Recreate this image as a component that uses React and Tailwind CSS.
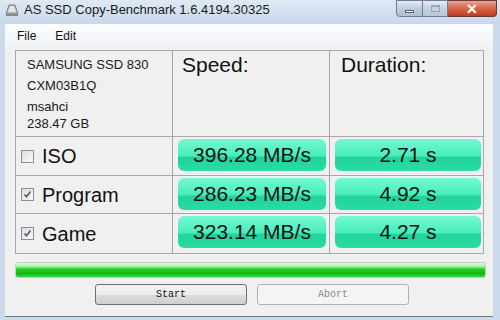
import React from 'react';

const rows = [
  { name: 'ISO', checked: false, speed: '396.28 MB/s', time: '2.71 s' },
  { name: 'Program', checked: true, speed: '286.23 MB/s', time: '4.92 s' },
  { name: 'Game', checked: true, speed: '323.14 MB/s', time: '4.27 s' },
];

const DriveIcon = () => (
  <svg width="14" height="14" viewBox="0 0 14 14">
    <path d="M4 2 L10 2 L13 11 L1 11 Z" fill="#b8b8b8" stroke="#6a6a6a" strokeWidth="0.8" />
    <rect x="1" y="11" width="12" height="2" fill="#8a8a8a" />
    <path d="M5 3 L9 3 L11 9 L3 9 Z" fill="#e4e4e4" />
  </svg>
);

const CheckBox = ({ checked }) => (
  <div className="w-[13px] h-[13px] border border-[#8f8f8f] bg-[linear-gradient(135deg,#dcdcdc,#fbfbfb)] flex items-center justify-center shrink-0">
    {checked && (
      <svg width="9" height="9" viewBox="0 0 9 9">
        <path d="M1.5 4.5 L3.5 6.8 L7.5 1.5" fill="none" stroke="#4a5a7a" strokeWidth="1.6" />
      </svg>
    )}
  </div>
);

const GreenCell = ({ children }) => (
  <div className="h-[32px] rounded-[6px] bg-[linear-gradient(to_bottom,#74f8d4_0%,#48eebb_52%,#22d49b_58%,#28dca3_100%)] flex items-center justify-center text-[21px] text-[#111]">
    {children}
  </div>
);

export default function App() {
  return (
    <div className="w-[500px] h-[320px] flex flex-col bg-[#cbdbeb] font-['Liberation_Sans',Arial,sans-serif] overflow-hidden">
      {/* title bar */}
      <div className="h-[24px] flex items-start shrink-0 bg-[linear-gradient(to_bottom,#dfe9f4,#c8d8ea)]">
        <div className="flex items-center h-[20px] pl-[5px] gap-[5px]">
          <DriveIcon />
          <span className="text-[13px] text-[#1a1a1a]">AS SSD Copy-Benchmark 1.6.4194.30325</span>
        </div>
        <div className="ml-auto mr-[3px] flex h-[17px]">
          <div className="w-[27px] h-full border border-[#6f7d8e] rounded-bl-[4px] bg-[linear-gradient(to_bottom,#e4ecf5,#bfcddd_50%,#aebfd3)] flex items-center justify-center">
            <div className="w-[9px] h-[3px] bg-white border border-[#55606e] mt-[5px]" />
          </div>
          <div className="w-[25px] h-full border-y border-r border-[#6f7d8e] bg-[linear-gradient(to_bottom,#e4ecf5,#c6d2e0_50%,#b8c7d8)] flex items-center justify-center">
            <div className="w-[9px] h-[7px] border border-[#9aa6b4] border-t-2" />
          </div>
          <div className="w-[49px] h-full border-y border-r border-[#6b3a30] rounded-br-[4px] bg-[linear-gradient(to_bottom,#e8a898,#d4654b_50%,#c23a1e)] flex items-center justify-center">
            <span className="text-white text-[14px] font-bold leading-none">✕</span>
          </div>
        </div>
      </div>

      {/* client area */}
      <div className="flex-1 ml-[5px] mr-[7px] mb-[3px] flex flex-col bg-[#f0f0f0] border-b border-[#6d7a88]">
        <div className="h-[23px] flex items-center gap-[19px] pl-[12px] text-[12px] text-[#111] bg-[linear-gradient(to_bottom,#fbfcfd,#f1f3f6)]">
          <span>File</span>
          <span>Edit</span>
        </div>

        <div className="pl-[10px] pt-[3px]">
          <div className="w-[469px] grid grid-cols-[156px_156px_153px] grid-rows-[85px_38px_37px_39px] gap-px p-px bg-[#a8a8a8]">
            <div className="bg-[#f0f0f0] pl-[11px] pt-[6px] text-[13px] text-[#1a1a1a] leading-[16px]">
              <div>SAMSUNG SSD 830</div>
              <div className="mt-[5px]">CXM03B1Q</div>
              <div className="mt-[5px]">msahci</div>
              <div className="mt-[1px]">238.47 GB</div>
            </div>
            <div className="bg-[#f0f0f0] pl-[9px] pt-[2px] text-[21px] leading-[24px] text-[#111]">Speed:</div>
            <div className="bg-[#f0f0f0] pl-[11px] pt-[2px] text-[21px] leading-[24px] text-[#111]">Duration:</div>

            {rows.map((r) => (
              <React.Fragment key={r.name}>
                <div className="bg-[#f0f0f0] flex items-center pl-[5px] gap-[8px]">
                  <CheckBox checked={r.checked} />
                  <span className="text-[20px] text-[#111]">{r.name}</span>
                </div>
                <div className="bg-[#f0f0f0] pl-[5px] pr-[3px] pt-[2px]">
                  <GreenCell>{r.speed}</GreenCell>
                </div>
                <div className="bg-[#f0f0f0] pl-[5px] pr-[2px] pt-[2px]">
                  <GreenCell>{r.time}</GreenCell>
                </div>
              </React.Fragment>
            ))}
          </div>

          <div className="mt-[8px] w-[471px] h-[16px] rounded-[3px] border border-[#b8d8b8] bg-[linear-gradient(to_bottom,#e4fbe4_0%,#a4f0a4_25%,#22cc22_45%,#14b814_75%,#3ad43a_100%)]" />

          <div className="mt-[6px] flex gap-[10px] pl-[80px]">
            <div className="w-[152px] h-[21px] rounded-[3px] border border-[#707070] bg-[linear-gradient(to_bottom,#f2f2f2,#ebebeb_50%,#dddddd_51%,#cfcfcf)] flex items-center justify-center text-[10px] font-['Liberation_Mono',monospace] text-[#111]">
              Start
            </div>
            <div className="w-[152px] h-[21px] rounded-[3px] border border-[#adb2b5] bg-[#f4f4f4] flex items-center justify-center text-[10px] font-['Liberation_Mono',monospace] text-[#8a8a8a]">
              Abort
            </div>
          </div>
        </div>
      </div>
    </div>
  );
}
